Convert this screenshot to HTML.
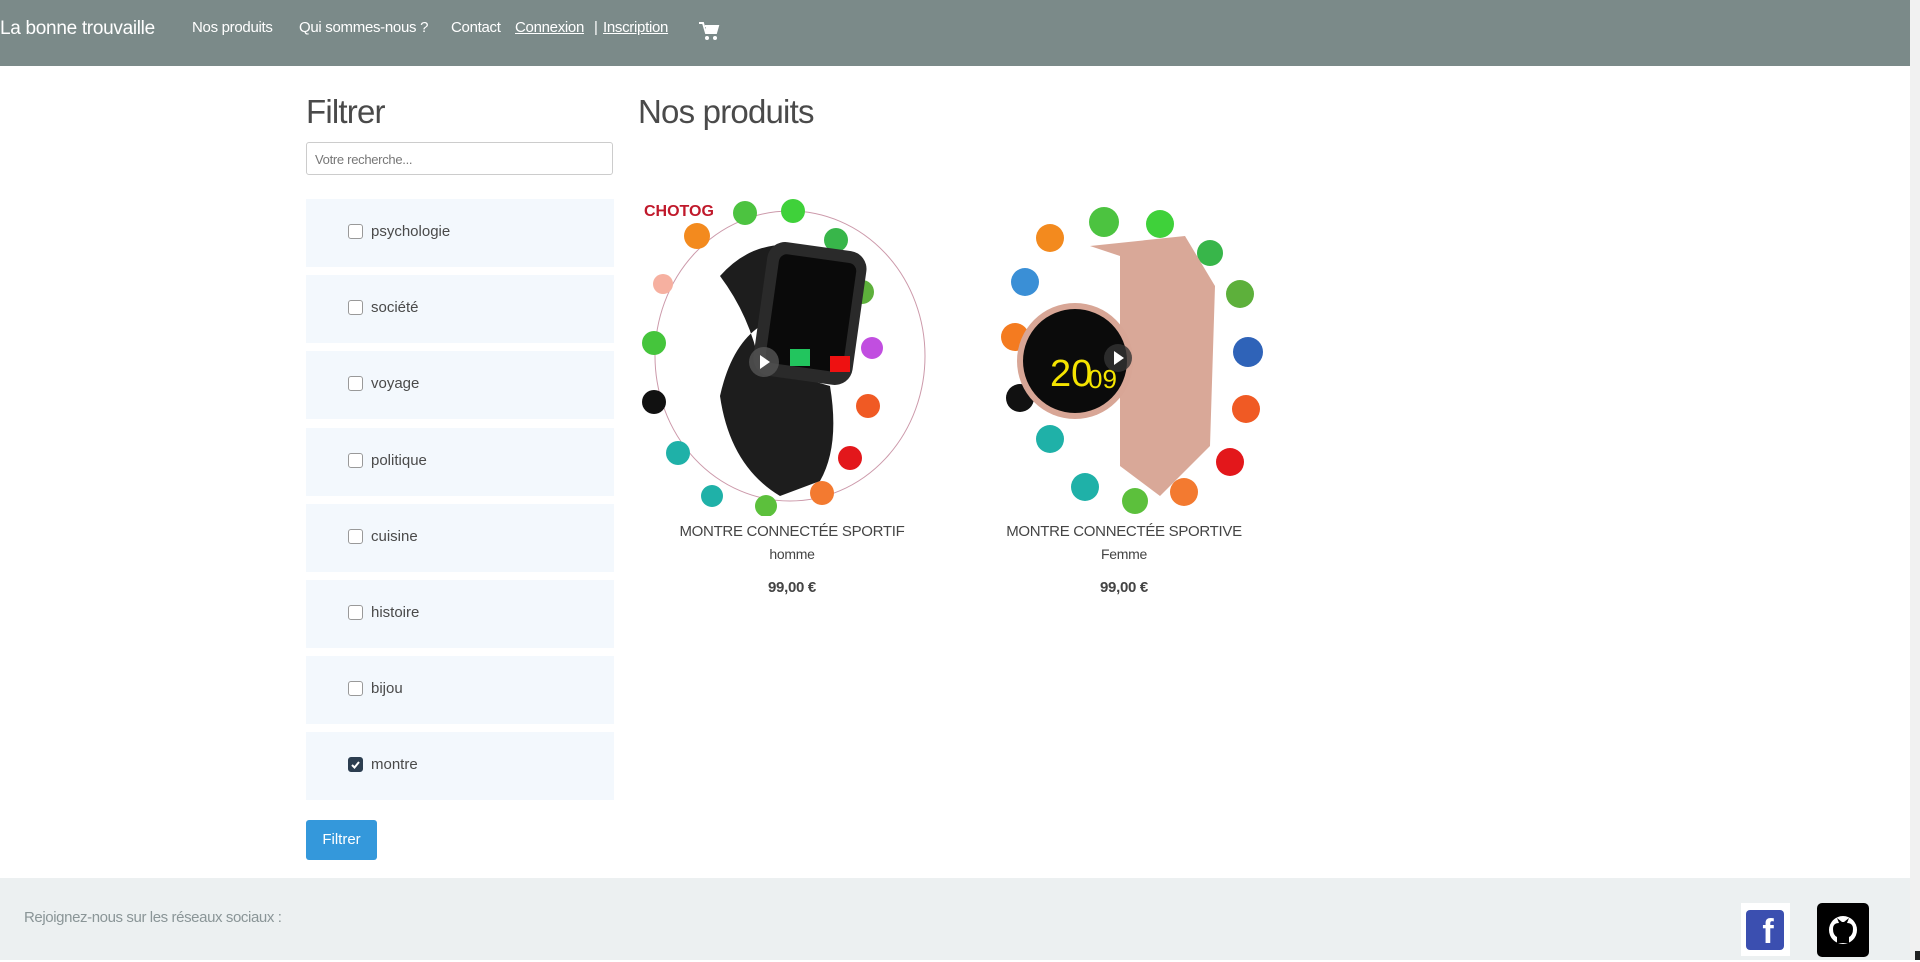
<!DOCTYPE html>
<html><head><meta charset="utf-8"><style>
*{box-sizing:border-box;margin:0;padding:0}
body{width:1920px;height:960px;overflow:hidden;background:#fff;font-family:"Liberation Sans",sans-serif;color:#555;position:relative}
.nav{position:absolute;left:0;top:0;width:1910px;height:66px;background:#7b8a89;color:#fff}
.nav span{position:absolute;top:19px;font-size:15px;white-space:nowrap;letter-spacing:-0.3px}
.sb{position:absolute;right:0;top:0;width:10px;height:960px;background:#f1f1f1}
h2{position:absolute;font-weight:normal;font-size:33px;color:#4a4a4a;letter-spacing:-0.8px}
.inp{position:absolute;left:306px;top:142px;width:307px;height:33px;border:1px solid #ccc;border-radius:3px;font-size:13px;color:#777;padding:9px 8px;letter-spacing:-0.3px}
.cat{position:absolute;left:306px;width:308px;height:68px;background:#f3f8fd}
.cb{position:absolute;left:42px;top:25px;width:15px;height:15px;border:1px solid #999;border-radius:3px;background:#fff}
.cb.on{background:#2c3e50;border-color:#2c3e50}
.cat span{position:absolute;left:65px;top:24px;font-size:15px;color:#4a4a4a}
.btn{position:absolute;left:306px;top:820px;width:71px;height:40px;background:#3498db;border-radius:3px;color:#fff;font-size:15px;text-align:center;line-height:40px}
.foot{position:absolute;left:0;top:878px;width:1910px;height:82px;background:#ecf0f1}
.t{position:absolute;text-align:center;width:330px;color:#444;letter-spacing:-0.3px}
</style></head><body>
<div class="nav">
<span style="left:0;top:18px;font-size:19px">La bonne trouvaille</span>
<span style="left:192px">Nos produits</span>
<span style="left:299px">Qui sommes-nous ?</span>
<span style="left:451px">Contact</span>
<span style="left:515px;text-decoration:underline">Connexion</span>
<span style="left:594px">|</span>
<span style="left:603px;text-decoration:underline">Inscription</span>
<svg style="position:absolute;left:698px;top:20px" width="22" height="22" viewBox="0 0 22 22"><path d="M1 3h4l3 10h10l2-7H7" fill="none" stroke="#fff" stroke-width="2"/><rect x="8" y="7" width="11" height="6" fill="#fff"/><circle cx="9" cy="18" r="2" fill="#fff"/><circle cx="17" cy="18" r="2" fill="#fff"/></svg>
</div>
<div class="sb"></div>
<h2 style="left:306px;top:93px">Filtrer</h2>
<h2 style="left:638px;top:93px">Nos produits</h2>
<div class="inp">Votre recherche...</div>
<div class="cat" style="top:199px"><div class="cb"></div><span>psychologie</span></div>
<div class="cat" style="top:275px"><div class="cb"></div><span>société</span></div>
<div class="cat" style="top:351px"><div class="cb"></div><span>voyage</span></div>
<div class="cat" style="top:428px"><div class="cb"></div><span>politique</span></div>
<div class="cat" style="top:504px"><div class="cb"></div><span>cuisine</span></div>
<div class="cat" style="top:580px"><div class="cb"></div><span>histoire</span></div>
<div class="cat" style="top:656px"><div class="cb"></div><span>bijou</span></div>
<div class="cat" style="top:732px"><div class="cb on"><svg width="13" height="13" viewBox="0 0 13 13"><path d="M3 7l2.5 2.5L10 4" stroke="#fff" stroke-width="2" fill="none"/></svg></div><span>montre</span></div>
<div class="btn">Filtrer</div>

<svg style="position:absolute;left:640px;top:196px" width="305" height="320" viewBox="0 0 305 320">
<text x="4" y="20" font-family="Liberation Sans" font-weight="bold" font-size="16" fill="#c0192b">CHOTOG</text>
<ellipse cx="150" cy="160" rx="135" ry="145" fill="none" stroke="#c9a" stroke-width="1"/>
<circle cx="57" cy="40" r="13" fill="#f38a1e"/><circle cx="105" cy="17" r="12" fill="#4cc340"/><circle cx="153" cy="15" r="12" fill="#3fd13a"/><circle cx="196" cy="44" r="12" fill="#38b64a"/><circle cx="222" cy="96" r="12" fill="#5db03b"/><circle cx="232" cy="152" r="11" fill="#c14ee0"/><circle cx="228" cy="210" r="12" fill="#f05a24"/><circle cx="210" cy="262" r="12" fill="#e3171b"/><circle cx="182" cy="297" r="12" fill="#f37a30"/><circle cx="126" cy="310" r="11" fill="#5cc03c"/><circle cx="72" cy="300" r="11" fill="#1fb1a8"/><circle cx="38" cy="257" r="12" fill="#1fb1a8"/><circle cx="14" cy="206" r="12" fill="#111"/><circle cx="14" cy="147" r="12" fill="#45c53c"/><circle cx="23" cy="88" r="10" fill="#f6b0a0"/>
<path d="M80 80 Q120 35 180 55 L175 120 Q100 110 80 200 Q90 270 140 300 L180 285 Q200 250 190 190 L120 170 Q110 120 80 80Z" fill="#1d1d1d"/>
<rect x="120" y="50" width="100" height="135" rx="18" transform="rotate(8 170 117)" fill="#2a2a2a"/>
<rect x="132" y="62" width="78" height="110" rx="8" transform="rotate(8 170 117)" fill="#0a0a0a"/>
<rect x="150" y="153" width="20" height="17" fill="#22c55e"/><rect x="190" y="160" width="20" height="16" fill="#e11"/>
<circle cx="124" cy="166" r="15" fill="#555" opacity=".8"/><path d="M120 159l10 7-10 7z" fill="#fff"/>
</svg>
<svg style="position:absolute;left:970px;top:196px" width="300" height="320" viewBox="0 0 300 320">
<circle cx="80" cy="42" r="14" fill="#f38a1e"/><circle cx="134" cy="26" r="15" fill="#4cc340"/><circle cx="190" cy="28" r="14" fill="#3fd13a"/><circle cx="240" cy="57" r="13" fill="#38b64a"/><circle cx="270" cy="98" r="14" fill="#5db03b"/><circle cx="278" cy="156" r="15" fill="#2f63b8"/><circle cx="276" cy="213" r="14" fill="#f05a24"/><circle cx="260" cy="266" r="14" fill="#e3171b"/><circle cx="214" cy="296" r="14" fill="#f37a30"/><circle cx="165" cy="305" r="13" fill="#5cc03c"/><circle cx="115" cy="291" r="14" fill="#1fb1a8"/><circle cx="80" cy="243" r="14" fill="#1fb1a8"/><circle cx="50" cy="202" r="14" fill="#111"/><circle cx="45" cy="141" r="14" fill="#f47b20"/><circle cx="55" cy="86" r="14" fill="#3a8fd6"/>
<path d="M120 50 L215 40 L245 90 L240 250 L190 300 L150 270 L150 60Z" fill="#d9a898"/>
<circle cx="105" cy="165" r="58" fill="#d8a696"/><circle cx="105" cy="165" r="52" fill="#0b0b0b"/>
<text x="80" y="190" font-family="Liberation Sans" font-size="38" fill="#f5e400">20</text><text x="118" y="192" font-size="26" font-family="Liberation Sans" fill="#f5e400">09</text>
<circle cx="148" cy="162" r="14" fill="#333" opacity=".8"/><path d="M144 155l10 7-10 7z" fill="#fff"/>
</svg>
<div class="t" style="left:627px;top:523px;font-size:15px">MONTRE CONNECTÉE SPORTIF</div>
<div class="t" style="left:627px;top:546px;font-size:14px">homme</div>
<div class="t" style="left:627px;top:579px;font-size:15px;font-weight:bold">99,00 €</div>
<div class="t" style="left:959px;top:523px;font-size:15px">MONTRE CONNECTÉE SPORTIVE</div>
<div class="t" style="left:959px;top:546px;font-size:14px">Femme</div>
<div class="t" style="left:959px;top:579px;font-size:15px;font-weight:bold">99,00 €</div>

<div class="foot"><span style="position:absolute;left:24px;top:31px;font-size:15px;color:#8a9597;letter-spacing:-0.4px">Rejoignez-nous sur les réseaux sociaux :</span></div>
<div style="position:absolute;left:1741px;top:903px;width:49px;height:53px;background:#fff"><div style="position:absolute;left:5px;top:7px;width:38px;height:40px;background:#3b4fb0;border-radius:4px;color:#fff;font:bold 34px 'Liberation Sans';text-align:center;line-height:44px;padding-left:6px">f</div></div>
<div style="position:absolute;left:1817px;top:903px;width:52px;height:54px;background:#000;border-radius:5px"><svg width="52" height="54" viewBox="0 0 52 54"><circle cx="26" cy="27" r="14" fill="#fff"/><path d="M20 40 L20 34 Q16 32 16 26 Q16 20 22 20 L20 15 L25 19 L27 19 L32 15 L30 20 Q36 20 36 26 Q36 32 32 34 L32 40Z" fill="#000"/></svg></div>
<div style="position:absolute;left:1915px;top:951px;width:5px;height:9px;background:#222"></div>
</body></html>
